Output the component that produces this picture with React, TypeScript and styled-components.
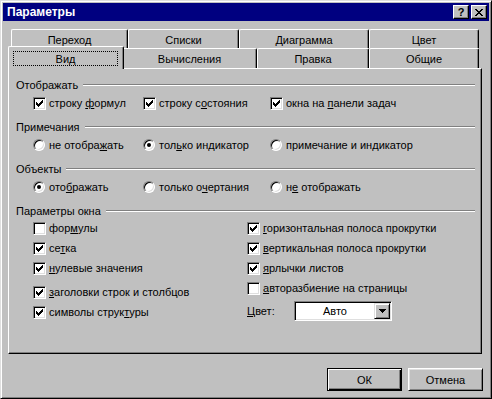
import React from "react";
import styled, { createGlobalStyle } from "styled-components";

const GlobalStyle = createGlobalStyle`
  html, body {
    margin: 0;
    padding: 0;
    background: #c0c0c0;
  }
  body {
    font-family: "Liberation Sans", Arial, sans-serif;
    font-size: 11px;
    color: #000;
  }
  u {
    text-decoration: underline;
    text-underline-offset: 1px;
  }
`;

const Window = styled.div`
  width: 492px;
  height: 399px;
  box-sizing: border-box;
  background: #c0c0c0;
  border: 1px solid;
  border-color: #dfdfdf #000 #000 #dfdfdf;
  box-shadow: inset 1px 1px 0 #fff, inset -1px -1px 0 #808080;
  padding: 2px;
  display: flex;
  flex-direction: column;
`;

const TitleBar = styled.div`
  height: 18px;
  background: #000080;
  color: #fff;
  display: flex;
  align-items: center;
  padding: 0 2px 0 4px;
  font-weight: bold;
  font-size: 12px;
`;

const TitleButtons = styled.div`
  margin-left: auto;
  display: flex;
  gap: 2px;
`;

const TitleButton = styled.div`
  width: 16px;
  height: 14px;
  box-sizing: border-box;
  background: #c0c0c0;
  color: #000;
  border: 1px solid;
  border-color: #fff #000 #000 #fff;
  box-shadow: inset -1px -1px 0 #808080;
  display: flex;
  align-items: center;
  justify-content: center;
  font-size: 11px;
  font-weight: bold;
  line-height: 1;
`;

const Body = styled.div`
  padding: 8px 7px 0 5px;
  display: flex;
  flex-direction: column;
`;

const TabRow = styled.div<{ $indent: number; $height: number }>`
  display: flex;
  margin-left: ${(p) => p.$indent}px;
  height: ${(p) => p.$height}px;
`;

const Tab = styled.div<{ $w: number }>`
  width: ${(p) => p.$w}px;
  box-sizing: border-box;
  border-top: 1px solid #fff;
  border-left: 1px solid #fff;
  border-right: 1px solid #000;
  border-top-left-radius: 2px;
  border-top-right-radius: 2px;
  box-shadow: inset -1px 0 0 #808080;
  display: flex;
  justify-content: center;
  padding-top: 4px;
  background: #c0c0c0;
`;

const ActiveTab = styled.div<{ $w: number }>`
  position: relative;
  z-index: 1;
  width: ${(p) => p.$w + 4}px;
  height: 23px;
  margin: -2px -2px 0 -2px;
  box-sizing: border-box;
  border-top: 1px solid #fff;
  border-left: 1px solid #fff;
  border-right: 1px solid #000;
  border-top-left-radius: 2px;
  border-top-right-radius: 2px;
  box-shadow: inset -1px 0 0 #808080;
  background: #c0c0c0;
  padding: 4px 5px 3px 4px;
  display: flex;
`;

const FocusBox = styled.div`
  flex: 1;
  border: 1px dotted #000;
  display: flex;
  align-items: center;
  justify-content: center;
  padding-top: 1px;
`;

const Panel = styled.div`
  height: 286px;
  box-sizing: border-box;
  border: 1px solid;
  border-color: #fff #000 #000 #fff;
  box-shadow: inset -1px -1px 0 #808080;
  padding: 9px 6px 0 7px;
  display: flex;
  flex-direction: column;
`;

const GroupHeader = styled.div`
  display: flex;
  align-items: center;
  height: 14px;
  gap: 5px;
`;

const GroupLine = styled.div`
  flex: 1;
  height: 0;
  border-top: 1px solid #808080;
  border-bottom: 1px solid #fff;
`;

const OptionRow = styled.div`
  display: grid;
  grid-template-columns: 110px 127px auto;
  padding-left: 17px;
  height: 18px;
  align-items: center;
  margin: 2px 0 8px;
`;

const Option = styled.label`
  display: flex;
  align-items: center;
  gap: 3px;
  white-space: nowrap;
`;

const Check = styled.span`
  width: 13px;
  height: 13px;
  box-sizing: border-box;
  background: #fff;
  border: 1px solid;
  border-color: #808080 #fff #fff #808080;
  box-shadow: inset 1px 1px 0 #000, inset -1px -1px 0 #dfdfdf;
  display: flex;
  align-items: center;
  justify-content: center;
  flex-shrink: 0;
`;

const Radio = styled.span`
  width: 12px;
  height: 12px;
  margin-right: 1px;
  box-sizing: border-box;
  border-radius: 50%;
  background: #fff;
  border: 1px solid;
  border-color: #808080 #fff #fff #808080;
  box-shadow: inset 1px 1px 0 #000, inset -1px -1px 0 #dfdfdf;
  display: flex;
  align-items: center;
  justify-content: center;
  flex-shrink: 0;
`;

const Dot = styled.span`
  width: 4px;
  height: 4px;
  border-radius: 50%;
  background: #000;
`;

const WindowGrid = styled.div`
  display: grid;
  grid-template-columns: 214px auto;
  padding-left: 17px;
`;

const Column = styled.div`
  display: flex;
  flex-direction: column;
`;

const GridItem = styled.div<{ $gap?: number }>`
  height: 20px;
  display: flex;
  align-items: center;
  margin-top: ${(p) => p.$gap ?? 0}px;
`;

const ColorRow = styled.div`
  display: flex;
  align-items: center;
  margin-top: 3px;
`;

const ColorLabel = styled.span`
  width: 47px;
`;

const Combo = styled.div`
  width: 98px;
  height: 20px;
  box-sizing: border-box;
  background: #fff;
  border: 1px solid;
  border-color: #808080 #fff #fff #808080;
  box-shadow: inset 1px 1px 0 #000, inset -1px -1px 0 #dfdfdf;
  padding: 1px;
  display: flex;
`;

const ComboText = styled.div`
  flex: 1;
  display: flex;
  align-items: center;
  justify-content: center;
`;

const ComboButton = styled.div`
  width: 16px;
  box-sizing: border-box;
  background: #c0c0c0;
  border: 1px solid;
  border-color: #dfdfdf #000 #000 #dfdfdf;
  box-shadow: inset 1px 1px 0 #fff, inset -1px -1px 0 #808080;
  display: flex;
  align-items: center;
  justify-content: center;
`;

const Footer = styled.div`
  display: flex;
  justify-content: flex-end;
  gap: 6px;
  margin: 14px -1px 0 0;
`;

const Button = styled.div<{ $default?: boolean }>`
  width: 75px;
  height: 23px;
  box-sizing: border-box;
  display: flex;
  align-items: center;
  justify-content: center;
  background: #c0c0c0;
  border: 1px solid ${(p) => (p.$default ? "#000" : "transparent")};
  box-shadow: ${(p) =>
    p.$default
      ? "inset 1px 1px 0 #fff, inset -1px -1px 0 #000, inset -2px -2px 0 #808080"
      : "inset 1px 1px 0 #fff, inset -1px -1px 0 #808080"};
  ${(p) =>
    p.$default
      ? ""
      : "border-color: #fff #000 #000 #fff; box-shadow: inset 1px 1px 0 #dfdfdf, inset -1px -1px 0 #808080;"}
`;

const CheckMark = () => (
  <svg width="7" height="7" viewBox="0 0 7 7" shapeRendering="crispEdges">
    <path
      fill="#000"
      d="M6 0h1v1h-1z M5 1h2v1h-2z M0 2h1v1h-1z M4 2h3v1h-3z M0 3h2v1h-2z M3 3h3v1h-3z M0 4h5v1h-5z M1 5h3v1h-3z M2 6h1v1h-1z"
    />
  </svg>
);

const CloseGlyph = () => (
  <svg width="8" height="7" viewBox="0 0 8 7" shapeRendering="crispEdges">
    <path
      fill="#000"
      d="M0 0h2v1h-2z M6 0h2v1h-2z M1 1h2v1h-2z M5 1h2v1h-2z M2 2h4v1h-4z M3 3h2v1h-2z M2 4h4v1h-4z M1 5h2v1h-2z M5 5h2v1h-2z M0 6h2v1h-2z M6 6h2v1h-2z"
    />
  </svg>
);

const DownArrow = () => (
  <svg width="7" height="4" viewBox="0 0 7 4" shapeRendering="crispEdges">
    <path fill="#000" d="M0 0h7v1h-7z M1 1h5v1h-5z M2 2h3v1h-3z M3 3h1v1h-1z" />
  </svg>
);

function CheckBox({ checked }: { checked: boolean }) {
  return <Check>{checked && <CheckMark />}</Check>;
}

function RadioButton({ checked }: { checked: boolean }) {
  return <Radio>{checked && <Dot />}</Radio>;
}

function Group({ title }: { title: string }) {
  return (
    <GroupHeader>
      <span>{title}</span>
      <GroupLine />
    </GroupHeader>
  );
}

const backTabs = [
  { label: "Переход", w: 117 },
  { label: "Списки", w: 111 },
  { label: "Диаграмма", w: 130 },
  { label: "Цвет", w: 110 },
];

const frontTabs = [
  { label: "Вычисления", w: 135 },
  { label: "Правка", w: 112 },
  { label: "Общие", w: 110 },
];

export default function App() {
  return (
    <>
      <GlobalStyle />
      <Window>
        <TitleBar>
          Параметры
          <TitleButtons>
            <TitleButton>?</TitleButton>
            <TitleButton>
              <CloseGlyph />
            </TitleButton>
          </TitleButtons>
        </TitleBar>

        <Body>
          <TabRow $indent={3} $height={19}>
            {backTabs.map((t) => (
              <Tab key={t.label} $w={t.w}>
                {t.label}
              </Tab>
            ))}
          </TabRow>
          <TabRow $indent={2} $height={20}>
            <ActiveTab $w={112}>
              <FocusBox>Вид</FocusBox>
            </ActiveTab>
            {frontTabs.map((t) => (
              <Tab key={t.label} $w={t.w}>
                {t.label}
              </Tab>
            ))}
          </TabRow>

          <Panel>
            <Group title="Отображать" />
            <OptionRow>
              <Option>
                <CheckBox checked />
                <span>
                  строку <u>ф</u>ормул
                </span>
              </Option>
              <Option>
                <CheckBox checked />
                <span>
                  строку с<u>о</u>стояния
                </span>
              </Option>
              <Option>
                <CheckBox checked />
                <span>
                  окна на <u>п</u>анели задач
                </span>
              </Option>
            </OptionRow>

            <Group title="Примечания" />
            <OptionRow>
              <Option>
                <RadioButton checked={false} />
                <span>
                  не отобра<u>ж</u>ать
                </span>
              </Option>
              <Option>
                <RadioButton checked />
                <span>
                  тол<u>ь</u>ко индикатор
                </span>
              </Option>
              <Option>
                <RadioButton checked={false} />
                <span>
                  примечание и ин<u>д</u>икатор
                </span>
              </Option>
            </OptionRow>

            <Group title="Объекты" />
            <OptionRow>
              <Option>
                <RadioButton checked />
                <span>
                  ото<u>б</u>ражать
                </span>
              </Option>
              <Option>
                <RadioButton checked={false} />
                <span>
                  только о<u>ч</u>ертания
                </span>
              </Option>
              <Option>
                <RadioButton checked={false} />
                <span>
                  н<u>е</u> отображать
                </span>
              </Option>
            </OptionRow>

            <Group title="Параметры окна" />
            <WindowGrid>
              <Column>
                <GridItem>
                  <Option>
                    <CheckBox checked={false} />
                    <span>
                      фор<u>м</u>улы
                    </span>
                  </Option>
                </GridItem>
                <GridItem>
                  <Option>
                    <CheckBox checked />
                    <span>
                      се<u>т</u>ка
                    </span>
                  </Option>
                </GridItem>
                <GridItem>
                  <Option>
                    <CheckBox checked />
                    <span>
                      <u>н</u>улевые значения
                    </span>
                  </Option>
                </GridItem>
                <GridItem $gap={4}>
                  <Option>
                    <CheckBox checked />
                    <span>
                      <u>з</u>аголовки строк и столбцов
                    </span>
                  </Option>
                </GridItem>
                <GridItem>
                  <Option>
                    <CheckBox checked />
                    <span>
                      символы струк<u>т</u>уры
                    </span>
                  </Option>
                </GridItem>
              </Column>
              <Column>
                <GridItem>
                  <Option>
                    <CheckBox checked />
                    <span>
                      <u>г</u>оризонтальная полоса прокрутки
                    </span>
                  </Option>
                </GridItem>
                <GridItem>
                  <Option>
                    <CheckBox checked />
                    <span>
                      <u>в</u>ертикальная полоса прокрутки
                    </span>
                  </Option>
                </GridItem>
                <GridItem>
                  <Option>
                    <CheckBox checked />
                    <span>
                      <u>я</u>рлычки листов
                    </span>
                  </Option>
                </GridItem>
                <GridItem>
                  <Option>
                    <CheckBox checked={false} />
                    <span>
                      <u>а</u>вторазбиение на страницы
                    </span>
                  </Option>
                </GridItem>
                <ColorRow>
                  <ColorLabel>
                    <u>Ц</u>вет:
                  </ColorLabel>
                  <Combo>
                    <ComboText>Авто</ComboText>
                    <ComboButton>
                      <DownArrow />
                    </ComboButton>
                  </Combo>
                </ColorRow>
              </Column>
            </WindowGrid>
          </Panel>

          <Footer>
            <Button $default>ОК</Button>
            <Button>Отмена</Button>
          </Footer>
        </Body>
      </Window>
    </>
  );
}
